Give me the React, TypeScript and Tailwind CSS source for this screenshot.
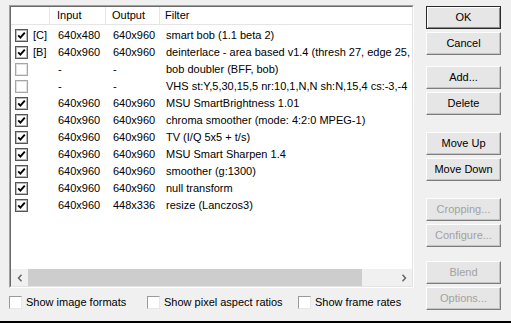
import clsx from 'clsx'

type Row = { on: boolean; tag?: string; input: string; output: string; filter: string }

const rows: Row[] = [
  { on: true, tag: '[C]', input: '640x480', output: '640x960', filter: 'smart bob (1.1 beta 2)' },
  { on: true, tag: '[B]', input: '640x960', output: '640x960', filter: 'deinterlace - area based v1.4 (thresh 27, edge 25,' },
  { on: false, input: '-', output: '-', filter: 'bob doubler (BFF, bob)' },
  { on: false, input: '-', output: '-', filter: 'VHS st:Y,5,30,15,5 nr:10,1,N,N sh:N,15,4 cs:-3,-4' },
  { on: true, input: '640x960', output: '640x960', filter: 'MSU SmartBrightness 1.01' },
  { on: true, input: '640x960', output: '640x960', filter: 'chroma smoother (mode: 4:2:0 MPEG-1)' },
  { on: true, input: '640x960', output: '640x960', filter: 'TV (I/Q 5x5 + t/s)' },
  { on: true, input: '640x960', output: '640x960', filter: 'MSU Smart Sharpen 1.4' },
  { on: true, input: '640x960', output: '640x960', filter: 'smoother (g:1300)' },
  { on: true, input: '640x960', output: '640x960', filter: 'null transform' },
  { on: true, input: '640x960', output: '448x336', filter: 'resize (Lanczos3)' },
]

function Check({ on, light }: { on: boolean; light?: boolean }) {
  return (
    <div
      className={clsx(
        'flex h-[13px] w-[13px] shrink-0 items-center justify-center bg-white',
        on
          ? 'border border-[#555] shadow-[inset_0_0_0_1px_#b8b8b8]'
          : light
            ? 'border border-[#9a9a9a] border-r-[#e8e8e8] border-b-[#e8e8e8]'
            : 'border border-[#a6a6a6] shadow-[inset_0_0_0_1px_#e2e2e2]',
      )}
    >
      {on && (
        <svg width="9" height="9" viewBox="0 0 9 9">
          <path d="M1.2 4.3 L3.4 6.6 L7.8 1.6" fill="none" stroke="#000" strokeWidth="1.9" />
        </svg>
      )}
    </div>
  )
}

function Btn({ label, def, disabled, className }: { label: string; def?: boolean; disabled?: boolean; className?: string }) {
  return (
    <div
      className={clsx(
        'flex h-[23px] w-[75px] items-center justify-center bg-[#e6e6e6] border',
        def
          ? 'border-[#2a2a2a] shadow-[inset_1px_1px_0_#ffffff,inset_-1px_-1px_0_#8a8a8a]'
          : 'border-t-[#fdfdfd] border-l-[#fdfdfd] border-r-[#7d7d7d] border-b-[#7d7d7d] shadow-[inset_-1px_-1px_0_#c4c4c4]',
        disabled ? 'text-[#a2a2a2]' : 'text-black',
        className,
      )}
    >
      {label}
    </div>
  )
}

function Option({ label, className }: { label: string; className: string }) {
  return (
    <div className={clsx('flex items-center', className)}>
      <Check on={false} light />
      <span className="ml-[4px]">{label}</span>
    </div>
  )
}

export default function App() {
  return (
    <div
      className="flex h-[323px] w-[511px] border-b-2 border-black bg-[#f0f0f0] text-[11px] leading-none text-black"
      style={{ fontFamily: '"Liberation Sans", Arial, sans-serif' }}
    >
      <div className="flex flex-col pl-[9px] pt-[5px]">
        <div className="h-[283px] w-[405px] border border-t-[#a0a0a0] border-l-[#a0a0a0] border-r-white border-b-white">
          <div className="flex h-full flex-col border border-t-[#696969] border-l-[#696969] border-r-[#e3e3e3] border-b-[#e3e3e3] bg-white">
            <div className="flex h-[18px] shrink-0 items-center border-b border-[#e5e5e5]">
              <div className="h-full w-[39px] border-r border-[#e5e5e5]" />
              <div className="flex h-full w-[56px] items-center border-r border-[#e5e5e5] pl-[7px]">Input</div>
              <div className="flex h-full w-[54px] items-center border-r border-[#e5e5e5] pl-[6px]">Output</div>
              <div className="flex h-full items-center pl-[5px]">Filter</div>
            </div>
            <div className="flex-1 overflow-hidden pt-[2px]">
              {rows.map((r, i) => (
                <div key={i} className="flex h-[17px] items-center whitespace-nowrap">
                  <div className="flex w-[47px] items-center pl-[4px]">
                    <Check on={r.on} />
                    {r.tag && <span className="ml-[5px]">{r.tag}</span>}
                  </div>
                  <div className="w-[55px]">{r.input}</div>
                  <div className="w-[53px]">{r.output}</div>
                  <div>{r.filter}</div>
                </div>
              ))}
            </div>
            <div className="flex h-[17px] shrink-0 items-center bg-[#f0f0f0]">
              <div className="flex h-full w-[17px] items-center justify-center">
                <svg width="6" height="8" viewBox="0 0 6 8">
                  <path d="M4.5 0.8 L1.5 4 L4.5 7.2" fill="none" stroke="#606060" strokeWidth="1.4" />
                </svg>
              </div>
              <div className="h-full w-[334px] bg-[#cdcdcd]" />
              <div className="flex-1" />
              <div className="flex h-full w-[17px] items-center justify-center">
                <svg width="6" height="8" viewBox="0 0 6 8">
                  <path d="M1.5 0.8 L4.5 4 L1.5 7.2" fill="none" stroke="#606060" strokeWidth="1.4" />
                </svg>
              </div>
            </div>
          </div>
        </div>
        <div className="mt-[8px] flex items-center">
          <Option label="Show image formats" className="w-[138px]" />
          <Option label="Show pixel aspect ratios" className="w-[151px]" />
          <Option label="Show frame rates" className="" />
        </div>
      </div>
      <div className="ml-[12px] flex flex-col pt-[6px]">
        <Btn label="OK" def />
        <Btn label="Cancel" className="mt-[3px]" />
        <Btn label="Add..." className="mt-[11px]" />
        <Btn label="Delete" className="mt-[3px]" />
        <Btn label="Move Up" className="mt-[17px]" />
        <Btn label="Move Down" className="mt-[3px]" />
        <Btn label="Cropping..." disabled className="mt-[17px]" />
        <Btn label="Configure..." disabled className="mt-[3px]" />
        <Btn label="Blend" disabled className="mt-[14px]" />
        <Btn label="Options..." disabled className="mt-[3px]" />
      </div>
    </div>
  )
}
